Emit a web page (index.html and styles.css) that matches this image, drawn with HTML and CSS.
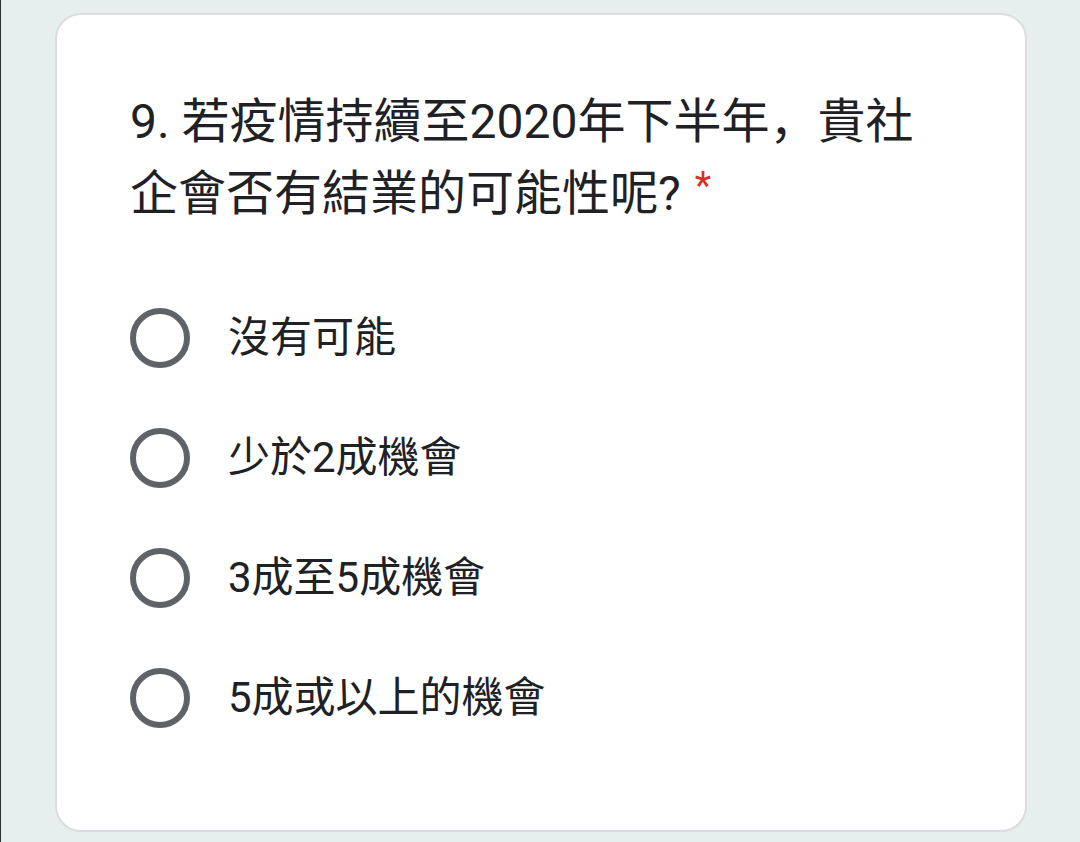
FILE: index.html
```html
<!DOCTYPE html>
<html lang="zh-Hant">
<head>
<meta charset="utf-8">
<title>Form question</title>
<link rel="stylesheet" href="styles.css">
</head>
<body>
<div class="page">
  <div class="card">
    <div class="title">9. 若疫情持續至2020年下半年<span class="comma" lang="zh-Hans">，</span>貴社企會否有結業的可能性呢?<span class="req">*</span></div>
    <div class="options">
      <div class="option"><span class="radio"></span><span class="label">沒有可能</span></div>
      <div class="option"><span class="radio"></span><span class="label">少於2成機會</span></div>
      <div class="option"><span class="radio"></span><span class="label">3成至5成機會</span></div>
      <div class="option"><span class="radio"></span><span class="label">5成或以上的機會</span></div>
    </div>
  </div>
</div>
</body>
</html>
```

FILE: styles.css
```css
html, body {
  margin: 0;
  padding: 0;
}
body {
  background: #e6efed;
  font-family: Roboto, "Noto Sans CJK TC", sans-serif;
  color: #202124;
}
.page {
  width: 1080px;
  height: 842px;
  box-sizing: border-box;
  border-left: 1px solid #2b2f2e;
  padding: 13px 0 0 54px;
  overflow: hidden;
}
.card {
  width: 972px;
  height: 819px;
  box-sizing: border-box;
  background: #ffffff;
  border: 2px solid #dadce0;
  border-radius: 26px;
  padding: 71px 80px 0 73px;
}
.title {
  font-size: 48px;
  line-height: 72px;
  width: 800px;
}
.comma {
  font-family: "Noto Sans CJK SC", sans-serif;
  line-height: 0;
}
.req {
  color: #d93025;
  font-size: 38px;
  line-height: 0;
  margin-left: 14px;
  vertical-align: 11px;
}
.options {
  margin-top: 48px;
}
.option {
  height: 120px;
  display: flex;
  align-items: center;
}
.radio {
  width: 60px;
  height: 60px;
  box-sizing: border-box;
  border: 6.5px solid #5f6368;
  border-radius: 50%;
  flex: none;
}
.label {
  margin-left: 38px;
  font-size: 42px;
  line-height: 60px;
}
```
